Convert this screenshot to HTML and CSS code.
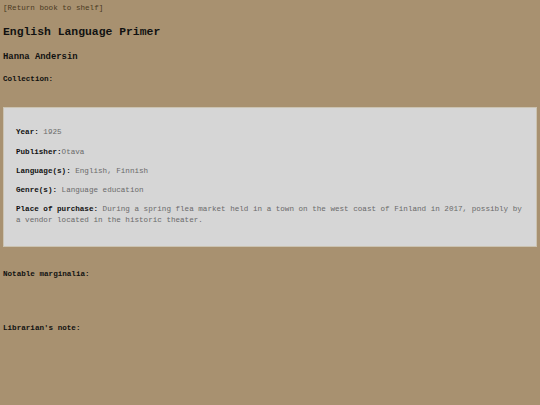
FILE: index.html
```html
<!DOCTYPE html>
<html>
<head>
<meta charset="utf-8">
<link rel="stylesheet" href="styles.css">
</head>
<body>
<div class="page">
  <a class="back" href="#">[Return book to shelf]</a>
  <h1 class="title">English Language Primer</h1>
  <h3 class="author">Hanna Andersin</h3>
  <h4 class="section collection">Collection:</h4>
  <div class="panel">
    <p class="row"><b>Year:</b> 1925</p>
    <p class="row"><b>Publisher:</b>Otava</p>
    <p class="row"><b>Language(s):</b> English, Finnish</p>
    <p class="row"><b>Genre(s):</b> Language education</p>
    <p class="row"><b>Place of purchase:</b> During a spring flea market held in a town on the west coast of Finland in 2017, possibly by a vendor located in the historic theater.</p>
  </div>
  <h4 class="section marginalia">Notable marginalia:</h4>
  <h4 class="section note">Librarian's note:</h4>
</div>
</body>
</html>
```

FILE: styles.css
```css
html, body {
  margin: 0;
  padding: 0;
  background: #a89170;
  height: 100%;
}
.page {
  font-family: "Liberation Mono", "Courier New", monospace;
  font-size: 7.6px;
  line-height: 11px;
  color: #111;
  padding: 2.5px 3px 0 3px;
  display: flex;
  flex-direction: column;
  align-items: flex-start;
}
.back {
  color: #4a3a22;
  text-decoration: none;
  display: block;
  line-height: 11px;
}
.title {
  font-size: 11.4px;
  line-height: 13px;
  font-weight: bold;
  margin: 12px 0 0 0;
}
.author {
  font-size: 8.9px;
  line-height: 11px;
  font-weight: bold;
  margin: 13px 0 0 0;
}
.section {
  font-size: 7.6px;
  line-height: 11px;
  font-weight: bold;
  margin: 0;
}
.collection { margin-top: 11px; }
.panel {
  align-self: stretch;
  margin-top: 22.5px;
  background: #d6d6d6;
  border: 1px solid #cbc3b1;
  padding: 11px 12px;
  color: #6a6a6a;
}
.row {
  margin: 8.3px 0;
}
.row b {
  color: #111;
}
.marginalia { margin-top: 22px; }
.note { margin-top: 43px; }
```
